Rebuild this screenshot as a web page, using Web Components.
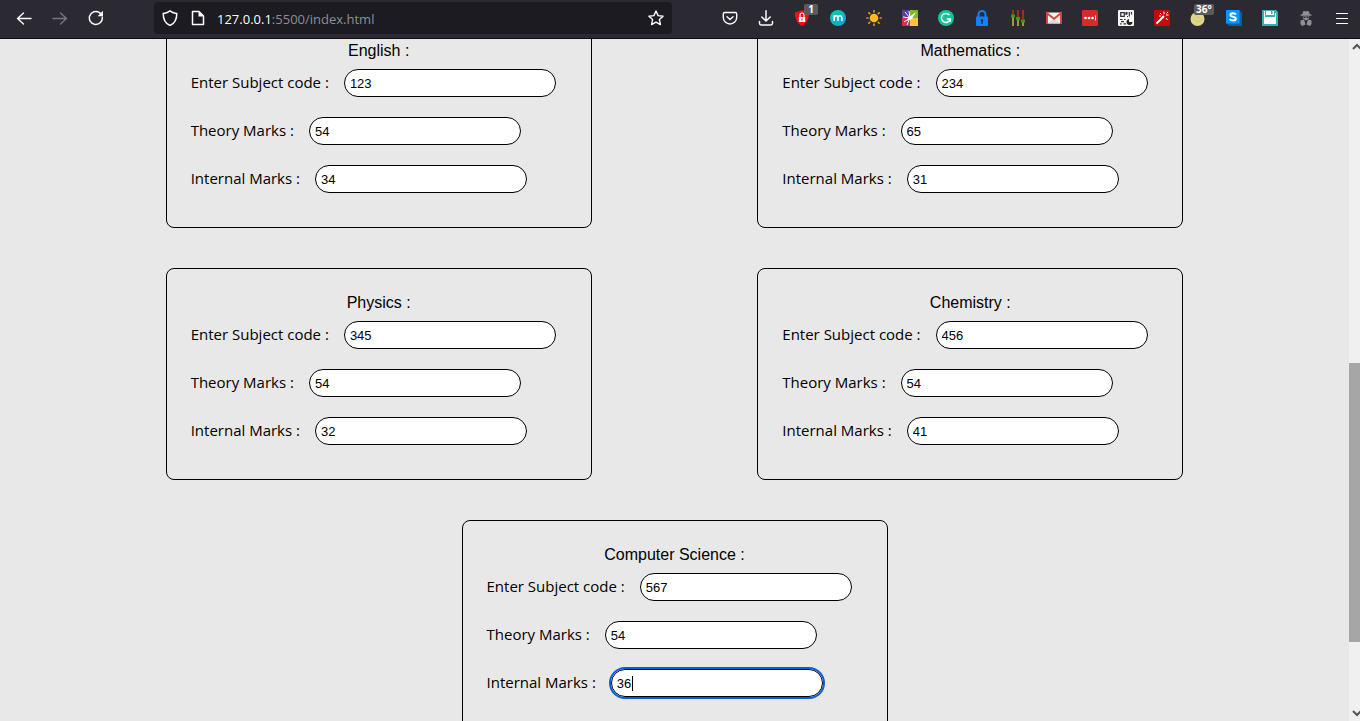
<!DOCTYPE html>
<html lang="en">
<head>
<meta charset="utf-8">
<title>Marks entry</title>
<style>
  html, body { height: 100%; margin: 0; }
  body { font-family: "Open Sans", "Noto Sans", sans-serif; color: #000; background: #e8e8e8; }
</style>
</head>
<body>
<browser-window>
  <browser-toolbar slot="toolbar"></browser-toolbar>
  <card-row>
    <subject-card name="English" code="123" theory="54" internal="34"></subject-card>
    <subject-card name="Mathematics" code="234" theory="65" internal="31"></subject-card>
  </card-row>
  <card-row>
    <subject-card name="Physics" code="345" theory="54" internal="32"></subject-card>
    <subject-card name="Chemistry" code="456" theory="54" internal="41"></subject-card>
  </card-row>
  <card-row>
    <subject-card name="Computer Science" code="567" theory="54" internal="36" active></subject-card>
  </card-row>
</browser-window>

<script>
const round = 'fill="none" stroke-linecap="round" stroke-linejoin="round"';
const line = `${round} stroke="#fbfbfe"`;
const ICONS = {
  back: `<path ${line} stroke-width="1.4" d="M15 8.5H1.5M7.5 3 1.5 8.5l6 5.5"/>`,
  forward: `<path ${round} stroke="#77767c" stroke-width="1.4" d="M1 8.500h13.500M8.500 3l6 5.500-6 5.500"/>`,
  reload: `<path ${line} stroke-width="1.5" d="M14.300 7.200A6.500 6.500 0 1 1 11.500 2.600L13 4"/><path fill="#fbfbfe" d="M15 .8v5.400H9.600z"/>`,
  shield: `<path ${line} stroke-width="1.500" d="M8 .8C6 2.300 3.700 3.200 1.200 3.400c0 5.600 1.800 10 6.800 12 5-2 6.800-6.400 6.800-12C12.300 3.200 10 2.300 8 .8z"/>`,
  page: `<path ${line} stroke-width="1.500" d="M3.500 1.500H9L13.500 6v8.500h-11v-13z"/><path fill="#fbfbfe" d="M8.500 1v5.500H14z"/>`,
  star: `<path ${line} stroke-width="1.400" d="m8 1 2.100 4.600 5 .6-3.700 3.400 1 5L8 12.100l-4.400 2.500 1-5L.9 6.200l5-.6z"/>`,
  pocket: `<path ${line} stroke-width="1.400" d="M2.800 2.500h10.400q1.500 0 1.500 1.500v3.500a6.700 6.500 0 0 1-13.400 0V4q0-1.500 1.500-1.500zM5 6.700l3 2.700 3-2.700"/>`,
  download: `<path ${line} stroke-width="1.500" d="M8 .8v10M3.800 7 8 11l4.200-4M1.500 11.500v1.800q0 1.700 1.700 1.700h9.600q1.700 0 1.700-1.700v-1.800"/>`,
  blocker: `<path fill="#f00f15" d="M8 0C5.700 1.300 3.300 2 .8 2.200 1 9 3 13.500 8 16c5-2.500 7-7 7.200-13.800C12.700 2 10.300 1.300 8 0z"/><path fill="#fff" d="M4.800 7h6.400v5H4.800z"/><path fill="none" stroke="#fff" stroke-width="1.200" d="M6 7V5a2 2 0 0 1 4 0v2"/><path fill="#f00f15" d="M7.500 8.600h1v2h-1z"/>`,
  malt: `<defs><linearGradient id="g" x1="0" y1="0" x2="1" y2="1"><stop offset="0" stop-color="#12cfa0"/><stop offset="1" stop-color="#109ee0"/></linearGradient></defs><circle cx="8" cy="8" r="8" fill="url(#g)"/><path fill="none" stroke="#fff" stroke-width="1.500" d="M4.200 11V5.300M4.200 7.200Q4.800 5.700 6.200 5.700T8 7.500V11M8 7.500Q8.400 5.700 10 5.700t1.900 1.800V11"/>`,
  sun: `<circle cx="8" cy="8" r="4.300" fill="#fdbc1a"/><path stroke="#d99b1c" stroke-width="1.700" stroke-linecap="round" d="M8 .8v1M8 14.200v1M.8 8h1M14.200 8h1M2.900 2.900l.8.800M12.300 12.300l.8.800M2.900 13.100l.8-.8M12.300 3.700l.8-.8"/>`,
  picker: `<path fill="#5b3e97" d="M0 0h8v8H0z"/><path fill="#79b92b" d="M8 0h8v8H8z"/><path fill="#d62d4a" d="M0 8h8v8H0z"/><path fill="#fbc53a" d="M8 8h8v8H8z"/><path stroke="#fff" stroke-width="1" d="M8 8 3 2M8 8 7 1M8 8 1 7M8 8l-6 4M8 8l-3 7"/><path fill="#fff" d="m6 8 8-6-4 7-5 2z"/>`,
  grammar: `<circle cx="8" cy="8" r="8" fill="#15c39a"/><path fill="none" stroke="#fff" stroke-width="1.500" d="M11.400 5A4.500 4.500 0 1 0 12.300 9H8.800M12.300 8.300v3.500"/>`,
  lock: `<path fill="none" stroke="#157efb" stroke-width="2" d="M4.500 7V4.500a3.500 3.500 0 0 1 7 0V7"/><rect x="2" y="6.500" width="12" height="9.500" rx="1" fill="#157efb"/><path fill="#1f2b45" d="M8 9a1.300 1.300 0 0 0-.6 2.400V14h1.200v-2.600A1.300 1.300 0 0 0 8 9z"/>`,
  sliders: `<path stroke="#e3261b" stroke-width="1.400" d="M3 0v5M8 0v7M13 0v9"/><path stroke="#d8ca25" stroke-width="1.400" d="M3 7v9M8 9v7M13 12v4"/><path fill="#35a00d" d="M1 4.500h4v3H1zM6 7h4v3H6zM11 9.500h4v3h-4z"/>`,
  mail: `<path fill="#f2f2f2" d="M1 2.500h14v11H1z"/><path fill="#d9d9d9" d="m2 13.500 6-5 6 5z"/><path fill="none" stroke="#db4437" stroke-width="1.900" d="M1 14V3.200l7 5.500 7-5.500V14"/>`,
  dots: `<rect width="16" height="16" rx="1.500" fill="#d32d27"/><g fill="#fff"><circle cx="3.500" cy="8" r="1.300"/><circle cx="7" cy="8" r="1.300"/><circle cx="10.500" cy="8" r="1.300"/><path d="M13 5.500h.9v5H13z"/></g>`,
  qr: `<rect width="16" height="16" rx="1" fill="#f5f5f5"/><g fill="none" stroke="#333" stroke-width="1.200"><path d="M2.700 2.700h3.600v3.600H2.700zM9 2v2.500M11.300 2v4.500M13.500 2v2.500M9 6.500h1M8 2v3"/><path d="M2 9.500h2.500M6 9.500h1.500M3 11.700h3M2 13.800h1.500M5.500 13.800h2.500"/></g><path fill="#222" d="M11 9v3h3.500a3 3 0 1 1-5-2.200z"/>`,
  wand: `<rect width="16" height="16" rx="1" fill="#c90909"/><path stroke="#fff" stroke-width="2" d="m2.500 13.500 7.500-7.500"/><path stroke="#fff" stroke-width="1" d="M10 1.500v2.800M6 3l1.500 1.500M12 5h2.500M12 8l1.500 2M12.500 3.500 14 2M5 6h2"/>`,
  weather: `<circle cx="7.500" cy="9" r="7" fill="#ded78a"/><path fill="none" stroke="#cfc66f" d="M3 8q5 7 9 1M6 5q1 3 4 3"/>`,
  cube: `<path fill="#0b5cab" d="M13 0l3 3v13H3l-3-3z"/><path fill="#0a94ff" d="M0 0h13.500v13.500H0z"/><path fill="none" stroke="#fff" stroke-width="2" d="M10 4.500Q9 3.200 7 3.200c-3.500 0-3.500 3 0 3.600 4 .7 3.500 3.700 0 3.700q-2.300 0-3.300-1.500"/>`,
  disk: `<path fill="#35b0b1" d="M0 0h14l2 2v14H0z"/><path fill="#fff" d="M2 7h12v7H2zM4 1h8v4H4zM2 1h1v7H2zM13 3h1v5h-1z"/><path fill="#35b0b1" d="M9 1h1.500v3H9z"/>`,
  agent: `<g fill="#919094"><path d="M5 1.500q1.500-.8 3 0 1.500-.8 3 0l.5 2.500 2 .8v.9h-11v-.9l2-.8z"/><path d="M4.500 6.500h7L10.500 9 8 10.500 5.500 9z"/><path d="M2.500 10.500 6 9.500l1.500 5L4 16l-1.500-2zM13.500 10.500 10 9.500l-1.500 5L12 16l1.500-2z"/></g><path stroke="#2b2a33" d="M5.500 7.500h2M8.500 7.500h2"/>`,
  menu: `<path ${line} stroke-width="1.200" d="M2.500 3.500h11M2.500 8.500h11M2.500 13.500h11"/>`
};

const shadow = (el, html) => {
  const t = document.createElement('template');
  t.innerHTML = html;
  const root = el.attachShadow({ mode: 'open' });
  root.append(t.content.cloneNode(true));
  return root;
};

/* A 16px glyph from the icon set */
customElements.define('ui-icon', class extends HTMLElement {
  constructor() {
    super();
    shadow(this, `<style>:host{display:block;width:16px;height:16px;flex:none}svg{display:block}</style>
      <svg viewBox="0 0 16 16" width="16" height="16" aria-hidden="true">${ICONS[this.getAttribute('name')]}</svg>`);
  }
});

/* Toolbar button with an optional badge */
customElements.define('tool-button', class extends HTMLElement {
  constructor() {
    super();
    const badge = this.getAttribute('badge');
    shadow(this, `<style>
      :host{display:block;flex:none}
      button{position:relative;display:flex;align-items:center;justify-content:center;width:36px;height:36px;padding:0;border:0;background:none}
      .badge{position:absolute;top:4px;left:20px;min-width:10px;padding:0 2px;border-radius:2px;background:#5b5b5e;color:#fff;font:bold 10px/11px "Open Sans",sans-serif;text-align:center}
      .wide{left:14px}
      </style>
      <button type="button" aria-label="${this.getAttribute('icon')}"><ui-icon name="${this.getAttribute('icon')}"></ui-icon>${badge ? `<span class="badge ${badge.length > 1 ? 'wide' : ''}">${badge}</span>` : ''}</button>`);
  }
});

customElements.define('address-bar', class extends HTMLElement {
  constructor() {
    super();
    shadow(this, `<style>
      :host{display:flex;align-items:center;box-sizing:border-box;height:32px;padding:0 8px;border-radius:4px;background:#1c1b22;color:#fbfbfe}
      .url{flex:1;min-width:0;margin-left:11px;padding-top:2px;font-size:13px;line-height:20px;white-space:nowrap;overflow:hidden}
      .rest{color:#8f8e94}
      .page{margin-left:12px}
      </style>
      <ui-icon name="shield"></ui-icon><ui-icon class="page" name="page"></ui-icon>
      <div class="url" role="textbox" aria-label="Address">127.0.0.1<span class="rest">:5500/index.html</span></div>
      <ui-icon name="star"></ui-icon>`);
  }
});

customElements.define('browser-toolbar', class extends HTMLElement {
  constructor() {
    super();
    const badges = { blocker: '1', weather: '36°' };
    const button = n => `<tool-button icon="${n}"${badges[n] ? ` badge="${badges[n]}"` : ''}></tool-button>`;
    const tools = ['pocket', 'download', 'blocker', 'malt', 'sun', 'picker', 'grammar', 'lock', 'sliders', 'mail', 'dots', 'qr', 'wand', 'weather', 'cube', 'disk', 'agent', 'menu'];
    shadow(this, `<style>
      :host{display:flex;align-items:center;box-sizing:border-box;height:39px;padding:0 0 2px 6px;border-bottom:1px solid #0c0c0d;background:#2b2a33}
      nav{display:flex;flex:none}
      address-bar{flex:1;min-width:0;margin:0 40px}
      </style>
      <nav>${['back', 'forward', 'reload'].map(button).join('')}</nav>
      <address-bar></address-bar>
      <nav>${tools.map(button).join('')}</nav>`);
  }
});

customElements.define('scroll-track', class extends HTMLElement {
  constructor() {
    super();
    shadow(this, `<style>
      :host{display:grid;grid-template-rows:324fr 279fr 79fr;width:11px;overflow:hidden;background:#f0f0f0}
      .thumb{background:#a6a6a6}
      .end{display:flex;padding:4px 0 4px 3px}
      .last{align-items:flex-end}
      svg{flex:none;display:block}
      path{fill:none;stroke:#555;stroke-width:2}
      </style>
      <div class="end"><svg width="10" height="8"><path d="M1 6l4-4 4 4"/></svg></div>
      <div class="thumb"></div>
      <div class="end last"><svg width="10" height="8"><path d="M1 2l4 4 4-4"/></svg></div>`);
  }
});

/* Toolbar on top, scrolled page and scroll bar below */
customElements.define('browser-window', class extends HTMLElement {
  constructor() {
    super();
    shadow(this, `<style>
      :host{display:flex;flex-direction:column;height:100vh;overflow:clip}
      .view{display:flex;flex:1;min-height:0;overflow:clip}
      main{flex:1;min-width:0}
      .scrolled{margin-top:-43px}
      </style>
      <slot name="toolbar"></slot>
      <div class="view"><main><div class="scrolled"><slot></slot></div></main><scroll-track></scroll-track></div>`);
  }
});

customElements.define('card-row', class extends HTMLElement {
  constructor() {
    super();
    shadow(this, `<style>:host{display:flex;justify-content:space-evenly;padding:20px 0}</style><slot></slot>`);
  }
});

customElements.define('mark-field', class extends HTMLElement {
  constructor() {
    super();
    const root = shadow(this, `<style>
      :host{display:flex;align-items:center;padding:10px 0}
      label{padding-bottom:2px;font-size:15px;line-height:20px;white-space:nowrap}
      input{box-sizing:border-box;width:212px;height:28px;margin:0 0 0 15px;padding:0 5px;border:1px solid #000;border-radius:14px;background:#fff;color:#000;font:13px "Liberation Sans",Arial,sans-serif}
      input:focus{outline:2px solid #0060df;outline-offset:0}
      /* steady caret after a two-digit mark, until the user types */
      input.steady:focus{caret-color:transparent;background:linear-gradient(#000,#000) 20px center/1px 15px no-repeat #fff}
      </style>
      <label for="field">${this.getAttribute('label')} :</label><input id="field" type="text" value="${this.getAttribute('value')}">`);
    this.input = root.querySelector('input');
  }
  connectedCallback() {
    if (!this.hasAttribute('active')) return;
    const { input } = this;
    input.classList.add('steady');
    for (const type of ['input', 'keydown', 'pointerdown', 'blur'])
      input.addEventListener(type, () => input.classList.remove('steady'));
    input.focus({ preventScroll: true });
    input.setSelectionRange(input.value.length, input.value.length);
  }
});

customElements.define('subject-card', class extends HTMLElement {
  constructor() {
    super();
    const a = n => this.getAttribute(n);
    shadow(this, `<style>
      :host{display:block;box-sizing:border-box;width:426px;padding:24px 24px 22px;border:1px solid #000;border-radius:8px}
      h2{margin:0;font:16px/20px "Liberation Sans",Arial,sans-serif;text-align:center}
      .fields{margin-top:-2px;padding-bottom:2px}
      </style>
      <h2>${a('name')} :</h2>
      <div class="fields">
      <mark-field label="Enter Subject code" value="${a('code')}"></mark-field>
      <mark-field label="Theory Marks" value="${a('theory')}"></mark-field>
      <mark-field label="Internal Marks" value="${a('internal')}"${this.hasAttribute('active') ? ' active' : ''}></mark-field>
      </div>`);
  }
});
</script>
</body>
</html>
